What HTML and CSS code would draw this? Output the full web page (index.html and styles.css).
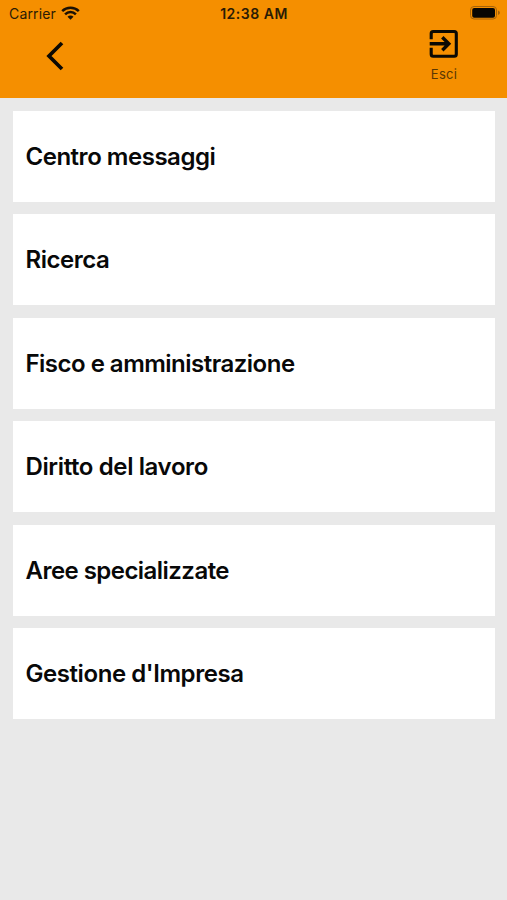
FILE: index.html
```html
<!DOCTYPE html>
<html lang="it">
<head>
<meta charset="utf-8">
<title>Menu</title>
<link rel="stylesheet" href="styles.css">
</head>
<body>
<header class="header">
  <div class="status">
    <div class="carrier"><span class="carrier-name">Carrier</span>
      <svg class="wifi" width="19" height="14" viewBox="0 0 19 14"><path d="M1.200 5.200a11.800 11.800 0 0 1 16.600 0M4.100 8.300a7.600 7.600 0 0 1 10.800 0" fill="none" stroke="#1c1204" stroke-width="2.500"/><path d="M9.500 13.700 6.500 10.800a4.200 4.200 0 0 1 6 0z" fill="#1c1204"/></svg>
    </div>
    <span class="time">12:38 AM</span>
    <svg class="battery" width="30" height="14" viewBox="0 0 30 14"><rect x=".5" y=".5" width="26" height="12.500" rx="3.500" fill="none" stroke="#a5630a"/><rect x="2.200" y="2" width="22.800" height="9.700" rx="2" fill="#080603"/><path d="M28 4.500q2 .7 2 2.300T28 9z" fill="#a5630a"/></svg>
  </div>
  <nav class="nav">
    <svg class="back" width="20" height="32" viewBox="0 0 20 32"><path d="M16 3 3 16 16 29" fill="none" stroke="#0b0903" stroke-width="3.700"/></svg>
    <div class="exit">
      <svg width="30" height="30" viewBox="0 0 30 30"><path d="M2.200 10.200V4.500Q2.200 2.500 4.200 2.500H25.300Q27.300 2.500 27.300 4.500V25.200Q27.300 27.200 25.300 27.200H4.200Q2.200 27.200 2.200 25.200V18.800" fill="none" stroke="#0b0903" stroke-width="3.100"/><path d="M.7 14.700H20M13.300 8.200 19.800 14.700 13.300 21.200" fill="none" stroke="#0b0903" stroke-width="3.400"/></svg>
      <span>Esci</span>
    </div>
  </nav>
</header>
<main class="list">
  <div class="card"><span class="t1">Centro messaggi</span></div>
  <div class="card"><span class="t2">Ricerca</span></div>
  <div class="card"><span class="t3">Fisco e amministrazione</span></div>
  <div class="card"><span class="t4">Diritto del lavoro</span></div>
  <div class="card"><span class="t5">Aree specializzate</span></div>
  <div class="card"><span class="t6">Gestione d'Impresa</span></div>
</main>
</body>
</html>
```
FILE: styles.css
```css
* { box-sizing: border-box; }
body { margin: 0; min-height: 900px; background: #e9e9e9; font-family: Inter, "Liberation Sans", sans-serif; color: #080808; }
svg { display: block; }
.header { height: 98px; background: #f58f00; }
.status { height: 27px; padding: 0 7px 0 9px; display: grid; grid-template-columns: 1fr auto 1fr; align-items: center; font-size: 14px; color: #2a1b05; }
.carrier { display: flex; align-items: center; gap: 5.500px; }
.carrier-name { letter-spacing: .15px; }
.wifi { margin-top: -1px; }
.time { font-weight: 600; letter-spacing: .5px; margin-right: 1px; }
.battery { justify-self: end; margin-top: -1px; }
.nav { display: flex; justify-content: space-between; padding: 2px 48px 0 46px; }
.back { margin-top: 11px; }
.exit { display: flex; flex-direction: column; align-items: center; width: 30px; font-size: 13px; color: #5a3804; letter-spacing: .3px; }
.exit span { line-height: 16px; margin-top: 7px; }
.list { display: flex; flex-direction: column; gap: 12.400px; padding: 13px 12px 0 13px; }
.card { height: 91px; background: #fff; display: flex; align-items: center; padding-left: 12.500px; font-size: 24px; font-weight: 600; white-space: nowrap; }
.t1 { letter-spacing: -.48px; }
.t2 { letter-spacing: -.48px; }
.t3 { letter-spacing: -.51px; }
.t4 { letter-spacing: -.38px; }
.t5 { letter-spacing: -.54px; }
.t6 { letter-spacing: -.43px; }
```
